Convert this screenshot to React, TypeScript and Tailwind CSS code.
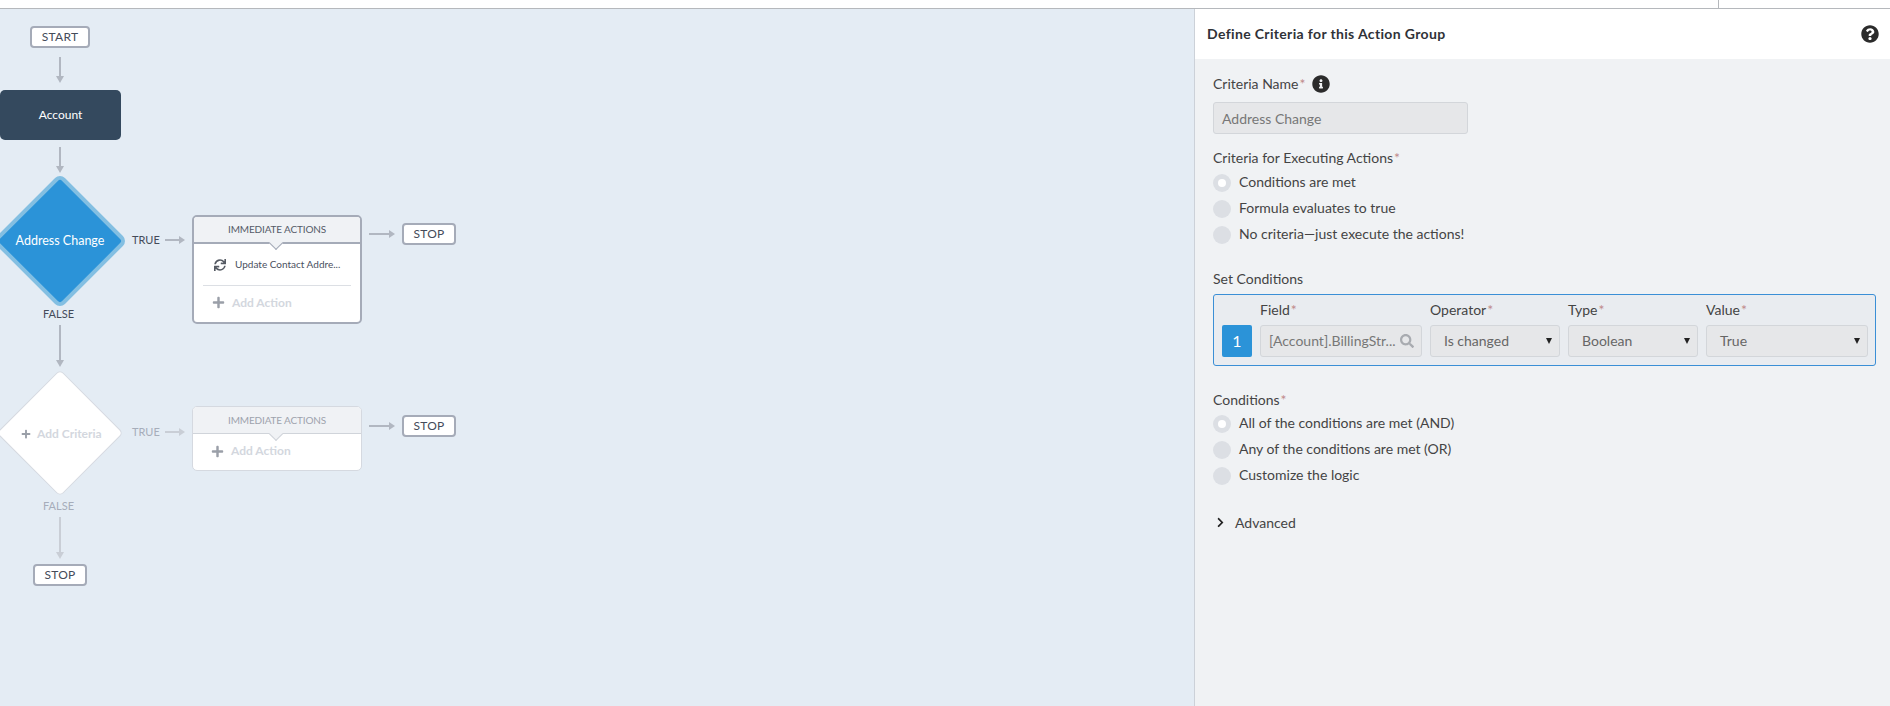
import type { ReactNode } from "react";
import { FaChevronRight, FaInfoCircle, FaPlus, FaQuestionCircle, FaSearch, FaSync } from "react-icons/fa";

const ui = "font-['Lato','Liberation_Sans',sans-serif]";

function ArrowDown({ className, len, color = "#b1b7c1" }: { className: string; len: number; color?: string }) {
  return (
    <svg className={`absolute ${className}`} width="10" height={len} viewBox={`0 0 10 ${len}`}>
      <path d={`M5 0V${len - 4}`} stroke={color} strokeWidth="2" />
      <path d={`M1 ${len - 7}L5 ${len}L9 ${len - 7}Z`} fill={color} />
    </svg>
  );
}

function ArrowRight({ className, len, color = "#b1b7c1" }: { className: string; len: number; color?: string }) {
  return (
    <svg className={`absolute ${className}`} width={len} height="10" viewBox={`0 0 ${len} 10`}>
      <path d={`M0 5H${len - 4}`} stroke={color} strokeWidth="2" />
      <path d={`M${len - 6} 1L${len} 5L${len - 6} 9Z`} fill={color} />
    </svg>
  );
}

function Pill({ className, children }: { className: string; children: ReactNode }) {
  return (
    <div className={`absolute h-[22px] flex items-center justify-center bg-white border-2 border-[#a5abb8] rounded-[4px] text-[12px] text-[#444b59] tracking-[0.3px] ${className}`}>
      {children}
    </div>
  );
}

function Caret({ border }: { border: string }) {
  return (
    <div className={`absolute left-1/2 -ml-[6px] -bottom-[6px] w-[10px] h-[10px] rotate-45 bg-[#f0f2f5] border-b border-r ${border}`} />
  );
}

function AddAction({ className }: { className: string }) {
  return (
    <div className={`flex items-center gap-[7px] text-[12px] font-bold text-[#d3d7de] ${className}`}>
      <FaPlus className="text-[#9a9fa8] text-[13px]" />
      Add Action
    </div>
  );
}

function FlowCanvas() {
  return (
    <div className={`relative flex-1 overflow-hidden bg-[#e4ecf4] ${ui}`}>
      <Pill className="left-[30px] top-[17px] w-[60px]">START</Pill>
      <ArrowDown className="left-[55px] top-[48px]" len={26} />

      <div className="absolute left-0 top-[81px] w-[121px] h-[50px] rounded-[5px] bg-[#34495e] flex items-center justify-center text-white text-[12px]">
        Account
      </div>
      <ArrowDown className="left-[55px] top-[138px]" len={26} />

      <div className="absolute left-[12px] top-[184px] w-[96px] h-[96px] rotate-45 rounded-[7px] bg-[#2b93d8] border-4 border-[#83bfe2]" />
      <div className="absolute left-0 top-[223px] w-[120px] text-center text-white text-[12.5px]">Address Change</div>
      <div className="absolute left-[132px] top-[223px] text-[11px] text-[#444b59]">TRUE</div>
      <ArrowRight className="left-[165px] top-[226px]" len={20} />

      <div className="absolute left-[192px] top-[206px] w-[170px] h-[109px] bg-white border-2 border-[#a5abb8] rounded-[5px]">
        <div className="relative h-[27px] bg-[#f0f2f5] border-b-2 border-[#a5abb8] rounded-t-[3px] flex items-center justify-center text-[10px] tracking-[-0.15px] text-[#555b68]">
          IMMEDIATE ACTIONS
          <Caret border="border-[#a5abb8]" />
        </div>
        <div className="flex items-center h-[41px] pl-[20px] gap-[9px] text-[10px] text-[#4a5060]">
          <FaSync className="text-[#555a63] text-[12px]" />
          Update Contact Addre...
        </div>
        <div className="mx-[9px] border-t border-[#dcdfe4]" />
        <AddAction className="pl-[18px] h-[33px]" />
      </div>

      <ArrowRight className="left-[369px] top-[220px]" len={26} />
      <Pill className="left-[402px] top-[214px] w-[54px]">STOP</Pill>

      <div className="absolute left-[43px] top-[297px] text-[11px] text-[#444b59]">FALSE</div>
      <ArrowDown className="left-[55px] top-[316px]" len={42} />

      <div className="absolute left-[15px] top-[379px] w-[90px] h-[90px] rotate-45 rounded-[5px] bg-white border border-[#d5d9e0]" />
      <div className="absolute left-[21px] top-[416px] flex items-center gap-[6px] text-[12px] font-bold text-[#d3d7de]">
        <FaPlus className="text-[#9a9fa8] text-[10px]" />
        Add Criteria
      </div>
      <div className="absolute left-[132px] top-[415px] text-[11px] text-[#a6adba]">TRUE</div>
      <ArrowRight className="left-[165px] top-[418px]" len={20} color="#c9ced6" />

      <div className="absolute left-[192px] top-[397px] w-[170px] h-[65px] bg-white border border-[#d5d9e0] rounded-[5px]">
        <div className="relative h-[27px] bg-[#f0f2f5] border-b border-[#d0d4da] rounded-t-[4px] flex items-center justify-center text-[10px] tracking-[-0.15px] text-[#9ea3ad]">
          IMMEDIATE ACTIONS
          <Caret border="border-[#d0d4da]" />
        </div>
        <AddAction className="pl-[18px] h-[34px]" />
      </div>

      <ArrowRight className="left-[369px] top-[412px]" len={26} />
      <Pill className="left-[402px] top-[406px] w-[54px]">STOP</Pill>

      <div className="absolute left-[43px] top-[489px] text-[11px] text-[#a6adba]">FALSE</div>
      <ArrowDown className="left-[55px] top-[508px]" len={42} color="#c9ced6" />
      <Pill className="left-[33px] top-[555px] w-[54px]">STOP</Pill>
    </div>
  );
}

function Label({ children }: { children: ReactNode }) {
  return (
    <span className="pb-[2px] text-[14px] text-[#444]">
      {children}
      <span className="text-[#c08a8a] ml-[1px]">*</span>
    </span>
  );
}

function Radio({ label, checked }: { label: string; checked?: boolean }) {
  return (
    <div className="flex items-center gap-[8px] h-[26px] text-[14px] text-[#444]">
      <span className="w-[18px] h-[18px] rounded-full bg-[#dcdfe4] flex items-center justify-center">
        {checked && <span className="w-[8px] h-[8px] rounded-full bg-white" />}
      </span>
      <span className="pb-[3px]">{label}</span>
    </div>
  );
}

function SelectBox({ value }: { value: string }) {
  return (
    <div className="h-[32px] flex items-center justify-between pl-[13px] pr-[6px] pb-[1px] bg-[#e6e7e9] border border-[#d3d6da] rounded-[3px] text-[14px] text-[#666]">
      {value}
      <svg width="8" height="8" viewBox="0 0 8 8">
        <path d="M1 1H7L4 7Z" fill="#222" />
      </svg>
    </div>
  );
}

function CriteriaPanel() {
  return (
    <div className={`w-[696px] flex flex-col border-l border-[#ccd1d8] bg-[#f0f2f4] ${ui}`}>
      <div className="h-[50px] bg-white flex items-center justify-between pl-[12px] pr-[11px]">
        <span className="pb-[2px] text-[14px] font-bold text-[#2f3238] tracking-[0.35px]">Define Criteria for this Action Group</span>
        <FaQuestionCircle className="text-[18px] text-[#2b2b2b]" />
      </div>

      <div className="pl-[18px] pr-[14px] pt-[15px]">
        <div className="flex items-center gap-[7px] h-[20px]">
          <Label>Criteria Name</Label>
          <FaInfoCircle className="text-[18px] text-[#2b2b2b]" />
        </div>
        <div className="mt-[8px] w-[255px] h-[32px] flex items-center px-[8px] bg-[#e6e7e9] border border-[#d3d6da] rounded-[3px] text-[14px] text-[#777]">
          Address Change
        </div>

        <div className="mt-[16px] h-[16px] flex items-center">
          <Label>Criteria for Executing Actions</Label>
        </div>
        <div className="mt-[4px]">
          <Radio label="Conditions are met" checked />
          <Radio label="Formula evaluates to true" />
          <Radio label="No criteria—just execute the actions!" />
        </div>

        <div className="mt-[22px] h-[18px] pb-[2px] flex items-center text-[14px] text-[#444]">Set Conditions</div>
        <div className="mt-[6px] h-[72px] border border-[#3b8fd6] rounded-[3px] bg-[#e9ecf0] px-[8px] grid grid-cols-[30px_162px_130px_130px_162px] gap-x-[8px] content-start">
          <div />
          <div className="h-[30px] flex items-center"><Label>Field</Label></div>
          <div className="h-[30px] flex items-center"><Label>Operator</Label></div>
          <div className="h-[30px] flex items-center"><Label>Type</Label></div>
          <div className="h-[30px] flex items-center"><Label>Value</Label></div>
          <div className="h-[32px] rounded-[2px] bg-[#2b93d8] flex items-center justify-center text-white text-[16px]">1</div>
          <div className="h-[32px] flex items-center justify-between pl-[8px] pr-[7px] pb-[1px] bg-[#e6e7e9] border border-[#d3d6da] rounded-[3px] text-[14px] text-[#777]">
            [Account].BillingStr...
            <FaSearch className="text-[14px] text-[#a8abb0]" />
          </div>
          <SelectBox value="Is changed" />
          <SelectBox value="Boolean" />
          <SelectBox value="True" />
        </div>

        <div className="mt-[26px] h-[16px] flex items-center">
          <Label>Conditions</Label>
        </div>
        <div className="mt-[3px]">
          <Radio label="All of the conditions are met (AND)" checked />
          <Radio label="Any of the conditions are met (OR)" />
          <Radio label="Customize the logic" />
        </div>

        <div className="mt-[24px] flex items-center gap-[9px] pl-[2px] h-[18px] text-[14px] text-[#444]">
          <FaChevronRight className="text-[11px] text-[#222]" />
          <span>Advanced</span>
        </div>
      </div>
    </div>
  );
}

export default function App() {
  return (
    <div className="h-screen flex flex-col overflow-hidden bg-white">
      <div className="relative h-[9px] border-b border-[#b5b8bc] flex justify-end pr-[171px]">
        <div className="w-px h-full bg-[#b5b8bc]" />
      </div>
      <div className="flex-1 flex min-h-0">
        <FlowCanvas />
        <CriteriaPanel />
      </div>
    </div>
  );
}
